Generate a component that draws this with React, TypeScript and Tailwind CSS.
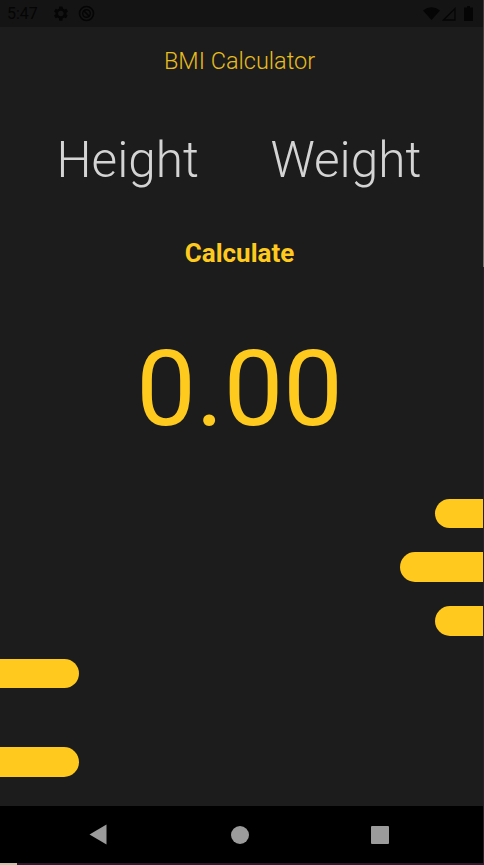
const font = "font-['Roboto',sans-serif]";

function StatusBar() {
  return (
    <div className="flex h-[27px] items-center bg-[#141414] pl-[7px] pr-[10px] text-[#050505]">
      <span className="w-[31px] text-[16px] font-normal leading-none">5:47</span>
      <svg className="ml-[13px]" width="19" height="19" viewBox="0 0 24 24" fill="currentColor">
        <path d="M19.400 13a7.500 7.500 0 0 0 0-2l2.100-1.600-2-3.500-2.500 1a7.500 7.500 0 0 0-1.700-1L14.400 3h-4l-.4 2.900a7.500 7.500 0 0 0-1.700 1l-2.500-1-2 3.500L5.900 11a7.500 7.500 0 0 0 0 2l-2.100 1.600 2 3.500 2.500-1a7.500 7.500 0 0 0 1.700 1l.4 2.900h4l.4-2.900a7.500 7.500 0 0 0 1.700-1l2.500 1 2-3.500zM12.400 15.500a3.500 3.500 0 1 1 0-7 3.500 3.500 0 0 1 0 7z" />
      </svg>
      <svg className="ml-[8px]" width="17" height="17" viewBox="0 0 17 17" fill="none" stroke="currentColor">
        <circle cx="8.500" cy="8.500" r="7" strokeWidth="1.600" />
        <circle cx="8.500" cy="8.500" r="3.800" strokeWidth="1.400" />
        <path d="M5.800 5.800l5.400 5.400" strokeWidth="1.600" />
      </svg>
      <div className="ml-auto flex items-center">
        <svg width="17" height="13" viewBox="0 0 17 13" fill="currentColor">
          <path d="M0 3.500Q8.500-3 17 3.500L8.500 13z" />
        </svg>
        <svg className="ml-[2px]" width="14" height="14" viewBox="0 0 14 14" fill="none" stroke="currentColor" strokeWidth="1.300">
          <path d="M13 1.500V13H1.500z" />
        </svg>
        <svg className="ml-[8px]" width="9" height="15" viewBox="0 0 9 15" fill="currentColor">
          <path d="M3 0h3v1.500h3V15H0V1.500h3z" />
        </svg>
      </div>
    </div>
  );
}

function NavBar() {
  return (
    <div className="flex h-[57px] items-center bg-black">
      <svg className="ml-[89px]" width="18" height="21" viewBox="0 0 18 21" fill="#9b9b9b">
        <path d="M17.500.500V20.500L.500 10.500z" />
      </svg>
      <div className="ml-[124px] h-[18px] w-[18px] rounded-full bg-[#9b9b9b]" />
      <div className="ml-[122px] h-[18px] w-[18px] rounded-[1px] bg-[#9b9b9b]" />
    </div>
  );
}

export default function App() {
  return (
    <div className={`${font} flex h-[865px] w-[484px] overflow-hidden bg-[#1c1c1c]`}>
      <div className="flex w-[483px] flex-col">
        <StatusBar />
        <div className="flex flex-1 flex-col">
          <div className="mt-[21px] pr-[4px] text-center text-[23.500px] font-light leading-[27px] text-[#e8bd1e]">BMI Calculator</div>

          <div className="mt-[56px] flex text-[49.500px] font-light leading-[58px] text-[#d4d4d4]">
            <span className="ml-[56.500px]">Height</span>
            <span className="ml-[71.500px]">Weight</span>
          </div>

          <div className="mt-[49px] pr-[4px] text-center text-[26px] font-bold leading-[30px] text-[#ffca1e]">Calculate</div>

          <div className="mt-[59px] pr-[4px] text-center text-[106px] leading-[124px] text-[#ffca1e]">0.00</div>

          {/* right bars */}
          <div className="mt-[48px] flex flex-col items-end gap-[24px]">
            <div className="h-[29px] w-[48px] rounded-l-full bg-[#ffc91d]" />
            <div className="h-[30px] w-[83px] rounded-l-full bg-[#ffc91d]" />
            <div className="h-[30px] w-[48px] rounded-l-full bg-[#ffc91d]" />
          </div>

          {/* left bars */}
          <div className="mt-[23px] flex flex-col items-start gap-[59px]">
            <div className="h-[29px] w-[79px] rounded-r-full bg-[#ffc91d]" />
            <div className="h-[30px] w-[79px] rounded-r-full bg-[#ffc91d]" />
          </div>
        </div>
        <NavBar />
        <div className="flex h-[2px]">
          <div className="w-[17px] bg-[#c9c4a8]" />
          <div className="flex-1 bg-[#2a1a2a]" />
        </div>
      </div>

      {/* window edge showing behind the screen */}
      <div className="flex w-px flex-col">
        <div className="h-[267px] bg-gradient-to-b from-[#3c3a38] to-[#77756f]" />
        <div className="flex-1 bg-[#2a2026]" />
      </div>
    </div>
  );
}
